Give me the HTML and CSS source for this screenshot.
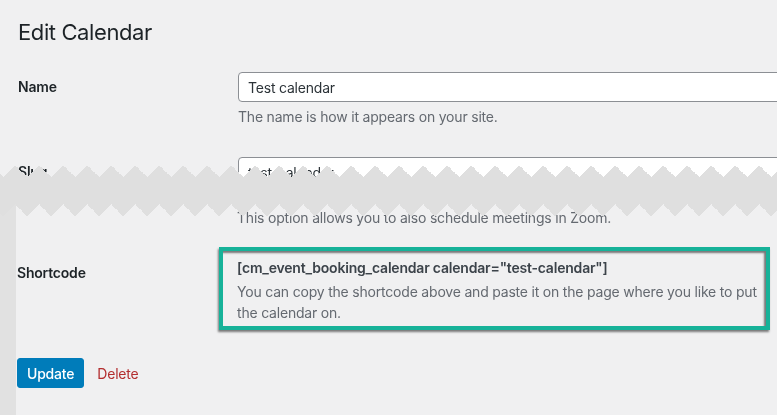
FILE: index.html
```html
<!DOCTYPE html>
<html lang="en">
<head>
    <meta charset="UTF-8">
    <meta name="viewport" content="width=device-width, initial-scale=1.0">
    <title>Edit Calendar</title>
    <link rel="stylesheet" href="styles.css">
</head>
<body>

    <!-- upper part of the screen -->
    <section class="shot shot-top">
        <h1 class="page-title">Edit Calendar</h1>

        <div class="form-row">
            <label for="tag-name">Name</label>
            <div class="field">
                <input type="text" id="tag-name" value="Test calendar">
                <p class="description">The name is how it appears on your site.</p>
            </div>
        </div>

        <div class="form-row">
            <label for="tag-slug">Slug</label>
            <div class="field">
                <input type="text" id="tag-slug" value="test-calendar">
            </div>
        </div>
    </section>

    <!-- lower part, after the tear -->
    <section class="shot shot-bottom">
        <div class="form-row">
            <span></span>
            <p class="description">This option allows you to also schedule meetings in Zoom.</p>
        </div>

        <div class="form-row shortcode-row">
            <label>Shortcode</label>
            <div class="field highlight">
                <p class="shortcode">[cm_event_booking_calendar calendar="test-calendar"]</p>
                <p class="description">You can copy the shortcode above and paste it on the page where you like to put<br>the calendar on.</p>
            </div>
        </div>

        <div class="actions">
            <button class="button-primary">Update</button>
            <a href="#" class="delete-link">Delete</a>
        </div>
    </section>

</body>
</html>
```

FILE: styles.css
```css
body {
    margin: 0;
    background-color: #dfdfdf;
    color: #1d2327;
    font-family: Inter, "Noto Sans", sans-serif;
    font-size: 14px;
    letter-spacing: -0.2px;
    overflow: hidden;
}

.shot {
    background-color: #f0f0f1;
    overflow: hidden;
}

.shot-top {
    height: 177px;
    box-sizing: border-box;
    padding: 17px 0 0 18px;
    -webkit-mask:
        linear-gradient(#000 0 0) top / 100% calc(100% - 12px) no-repeat,
        conic-gradient(from -45deg at 50% 100%, #000 90deg, #0000 0) 15px 100% / 24px 12px repeat-x;
    mask:
        linear-gradient(#000 0 0) top / 100% calc(100% - 12px) no-repeat,
        conic-gradient(from -45deg at 50% 100%, #000 90deg, #0000 0) 15px 100% / 24px 12px repeat-x;
}

.shot-bottom {
    margin-top: 27px;
    height: 211px;
    box-sizing: border-box;
    padding: 4px 0 0 1px;
    border-left: 16px solid #e1e1e1;
    -webkit-mask:
        linear-gradient(#000 0 0) bottom / 100% calc(100% - 12px) no-repeat,
        conic-gradient(from 135deg at 50% 0, #000 90deg, #0000 0) 3px 0 / 24px 12px repeat-x;
    mask:
        linear-gradient(#000 0 0) bottom / 100% calc(100% - 12px) no-repeat,
        conic-gradient(from 135deg at 50% 0, #000 90deg, #0000 0) 3px 0 / 24px 12px repeat-x;
}

.page-title {
    margin: 0 0 25px;
    font-size: 22px;
    font-weight: 400;
    line-height: 30px;
    letter-spacing: -0.4px;
}

.form-row {
    display: grid;
    grid-template-columns: 220px 1fr;
    margin-bottom: 30px;
}

.form-row label {
    font-weight: 600;
    line-height: 30px;
}

.form-row input {
    display: block;
    width: 600px;
    height: 30px;
    box-sizing: border-box;
    padding: 0 9px;
    border: 1px solid #8c8f94;
    border-radius: 4px;
    background: #fff;
    color: #2c3338;
    font-family: inherit;
    font-size: 14px;
    letter-spacing: inherit;
}

.description {
    margin: 5px 0 0;
    color: #646970;
    line-height: 20px;
}

.shot-bottom .form-row:first-child {
    margin-bottom: 19px;
}

.shot-bottom .form-row:first-child .description {
    margin: 0;
}

.shortcode-row {
    margin-bottom: 28px;
}

.shortcode-row label {
    padding-top: 11px;
}

.highlight {
    width: 551px;
    box-sizing: border-box;
    margin-left: -18px;
    padding: 6px 2px 3px 14px;
    border: 4px solid #17b299;
    box-shadow: -1px 2px 2px rgba(0, 0, 0, 0.5), inset -2px 2px 2px rgba(0, 0, 0, 0.5);
    white-space: nowrap;
}

.shortcode {
    margin: 0 0 3px;
    color: #3c434a;
    font-weight: 600;
    line-height: 21px;
}

.highlight .description {
    margin: 0;
    line-height: 21px;
}

.actions {
    display: flex;
    align-items: center;
    gap: 13px;
}

.button-primary {
    height: 30px;
    padding: 0 9px;
    border: 1px solid #007cba;
    border-radius: 3px;
    background: #007cba;
    color: #fff;
    font-family: inherit;
    font-size: 14px;
    font-weight: 500;
    letter-spacing: inherit;
    cursor: pointer;
}

.delete-link {
    color: #b32d2e;
    text-decoration: none;
}
```
